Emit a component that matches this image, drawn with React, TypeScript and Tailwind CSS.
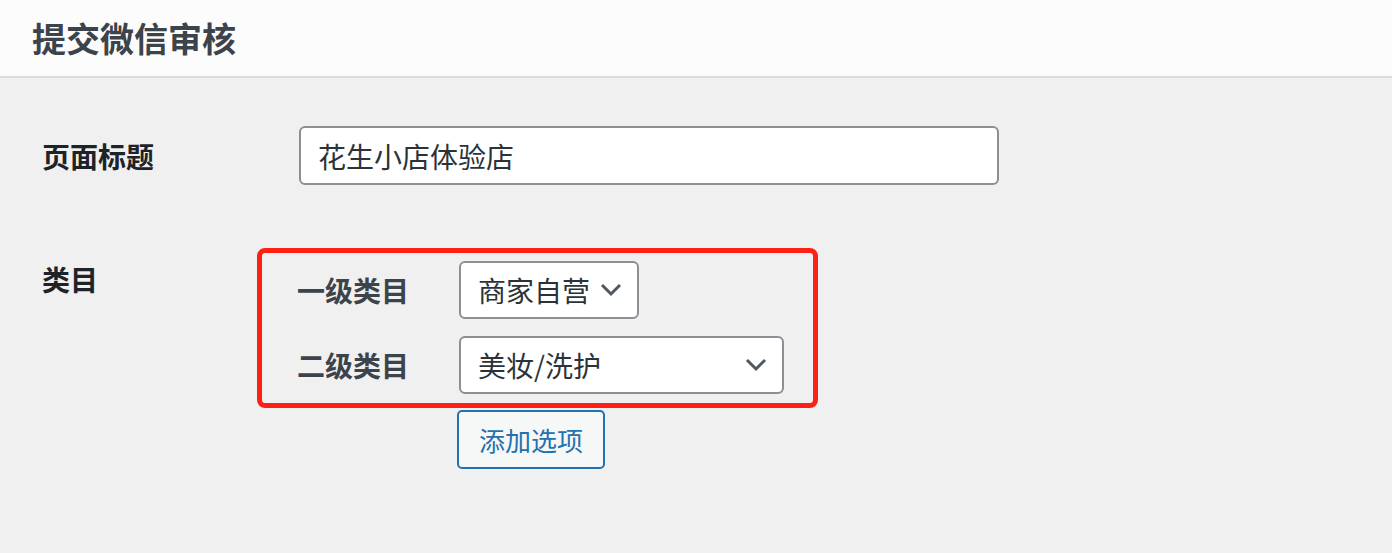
import React from 'react';

const font = { fontFamily: '"Noto Sans CJK SC", "Noto Sans", sans-serif' };

const Chevron = () => (
    <svg width="22" height="14" viewBox="0 0 22 14" className="shrink-0">
        <path d="M2 2l9 9 9-9" fill="none" stroke="#50575e" strokeWidth="3" />
    </svg>
);

const Select: React.FC<{ value: string; width: string }> = ({ value, width }) => (
    <div className={`${width} h-[58px] flex items-center justify-between pl-[17px] pr-[15px] bg-white border-2 border-[#8c8f94] rounded-[6px]`}>
        <span className="text-[28px] leading-none text-[#2c3338]">{value}</span>
        <Chevron />
    </div>
);

export default function App() {
    return (
        <div className="w-[1392px] h-[553px] bg-[#f0f0f1] overflow-hidden" style={font}>
            <header className="h-[78px] bg-[#fcfcfc] border-b-2 border-[#dcdcde] flex items-center pl-[32px]">
                <h1 className="text-[34px] font-bold text-[#3c434a] leading-none">提交微信审核</h1>
            </header>

            <main className="pl-[42px] pt-[48px]">
                <div className="flex items-center">
                    <div className="w-[257px] text-[28px] font-bold text-[#1d2327] leading-none">页面标题</div>
                    <div className="w-[700px] h-[59px] bg-white border-2 border-[#8c8f94] rounded-[6px] flex items-center pl-[17px]">
                        <span className="text-[28px] leading-none text-[#2c3338]">花生小店体验店</span>
                    </div>
                </div>

                <div className="flex items-start mt-[63px]">
                    <div className="w-[215px] mt-[17px] text-[28px] font-bold text-[#1d2327] leading-none">类目</div>
                    <div>
                        <div className="w-[561px] border-[5px] border-[#ff2015] rounded-[8px] pl-[35px] pt-[8px] pb-[9px] flex flex-col gap-[17px]">
                            <div className="flex items-center">
                                <div className="w-[162px] text-[28px] font-bold text-[#3c434a] leading-none">一级类目</div>
                                <Select value="商家自营" width="w-[180px]" />
                            </div>
                            <div className="flex items-center">
                                <div className="w-[162px] text-[28px] font-bold text-[#3c434a] leading-none">二级类目</div>
                                <Select value="美妆/洗护" width="w-[325px]" />
                            </div>
                        </div>
                        <button className="ml-[200px] mt-[2px] w-[148px] h-[59px] bg-[#f6f7f7] border-2 border-[#2271b1] rounded-[5px] text-[26px] text-[#2271b1] leading-none">
                            添加选项
                        </button>
                    </div>
                </div>
            </main>
        </div>
    );
}
